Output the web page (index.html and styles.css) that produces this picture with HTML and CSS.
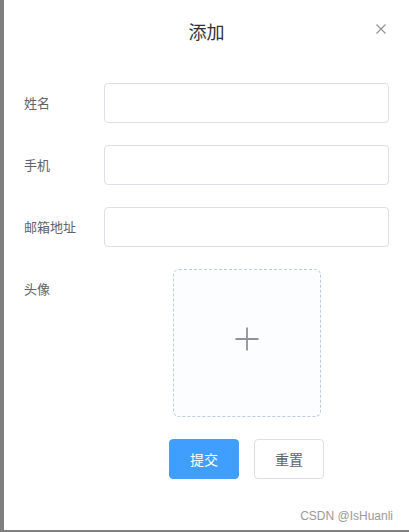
FILE: index.html
```html
<!DOCTYPE html>
<html lang="zh-CN">
<head>
<meta charset="utf-8">
<title>添加</title>
<link rel="stylesheet" href="styles.css">
</head>
<body>
<div class="page">
  <div class="dialog">
    <div class="dialog-header">
      <span class="dialog-title">添加</span>
      <button class="dialog-close" type="button" aria-label="关闭">
        <svg width="10" height="10" viewBox="0 0 10 10"><path d="M0.5 0.5 L9.5 9.5 M9.5 0.5 L0.5 9.5" stroke="#909399" stroke-width="1.2" fill="none"/></svg>
      </button>
    </div>
    <form class="dialog-body">
      <div class="form-item">
        <label class="form-label">姓名</label>
        <div class="form-content"><input class="form-input" type="text"></div>
      </div>
      <div class="form-item">
        <label class="form-label">手机</label>
        <div class="form-content"><input class="form-input" type="text"></div>
      </div>
      <div class="form-item">
        <label class="form-label">邮箱地址</label>
        <div class="form-content"><input class="form-input" type="text"></div>
      </div>
      <div class="form-item">
        <label class="form-label">头像</label>
        <div class="form-content center">
          <div class="upload-card">
            <svg width="24" height="24" viewBox="0 0 24 24"><path d="M12 0.5 V23.5 M0.5 12 H23.5" stroke="#8c939d" stroke-width="1.8" fill="none"/></svg>
          </div>
        </div>
      </div>
      <div class="form-item">
        <div class="form-label"></div>
        <div class="form-content center buttons">
          <button class="btn btn-primary" type="button">提交</button>
          <button class="btn" type="button">重置</button>
        </div>
      </div>
    </form>
    <div class="watermark">CSDN @IsHuanli</div>
  </div>
</div>
</body>
</html>
```
FILE: styles.css
```css
html, body {
  margin: 0;
  padding: 0;
}
body {
  background: #7f7f7f;
  font-family: "Liberation Sans", "Noto Sans CJK SC", sans-serif;
}
.page {
  width: 409px;
  height: 532px;
  padding-left: 4px;
  padding-bottom: 2px;
  box-sizing: border-box;
}
.dialog {
  position: relative;
  height: 530px;
  background: #fff;
  box-sizing: border-box;
}
.dialog-header {
  padding: 19px 20px 11px;
  text-align: center;
  position: relative;
}
.dialog-title {
  font-family: "Noto Sans CJK SC", sans-serif;
  font-size: 18px;
  line-height: 24px;
  color: #303133;
  display: block;
}
.dialog-close {
  position: absolute;
  top: 24px;
  right: 22px;
  width: 11px;
  height: 11px;
  padding: 0;
  border: 0;
  background: transparent;
  display: flex;
}
.dialog-body {
  padding: 29px 20px 0;
  margin: 0;
  display: flex;
  flex-direction: column;
  gap: 22px;
}
.form-item {
  display: flex;
}
.form-label {
  width: 80px;
  flex: none;
  font-family: "Noto Sans CJK SC", sans-serif;
  font-size: 13px;
  line-height: 40px;
  color: #606266;
}
.form-content {
  flex: 1;
  display: flex;
}
.form-content.center {
  justify-content: center;
}
.form-input {
  width: 100%;
  height: 40px;
  box-sizing: border-box;
  border: 1px solid #dcdfe6;
  border-radius: 4px;
  padding: 0 15px;
  margin: 0;
  background: #fff;
  outline: none;
}
.upload-card {
  width: 148px;
  height: 148px;
  box-sizing: border-box;
  border: 1px dashed #c0ccda;
  border-radius: 6px;
  background: #fbfdff;
  display: flex;
  align-items: center;
  justify-content: center;
  padding-bottom: 8px;
}
.buttons {
  gap: 15px;
}
.btn {
  width: 70px;
  height: 40px;
  box-sizing: border-box;
  border: 1px solid #dcdfe6;
  border-radius: 4px;
  background: #fff;
  color: #606266;
  font-family: "Noto Sans CJK SC", sans-serif;
  font-size: 14px;
  padding: 0;
  margin: 0;
}
.btn-primary {
  background: #409eff;
  border-color: #409eff;
  color: #fff;
}
.watermark {
  position: absolute;
  right: 16px;
  bottom: 7px;
  font-family: "Liberation Sans", sans-serif;
  font-size: 12px;
  color: #999;
}
```
